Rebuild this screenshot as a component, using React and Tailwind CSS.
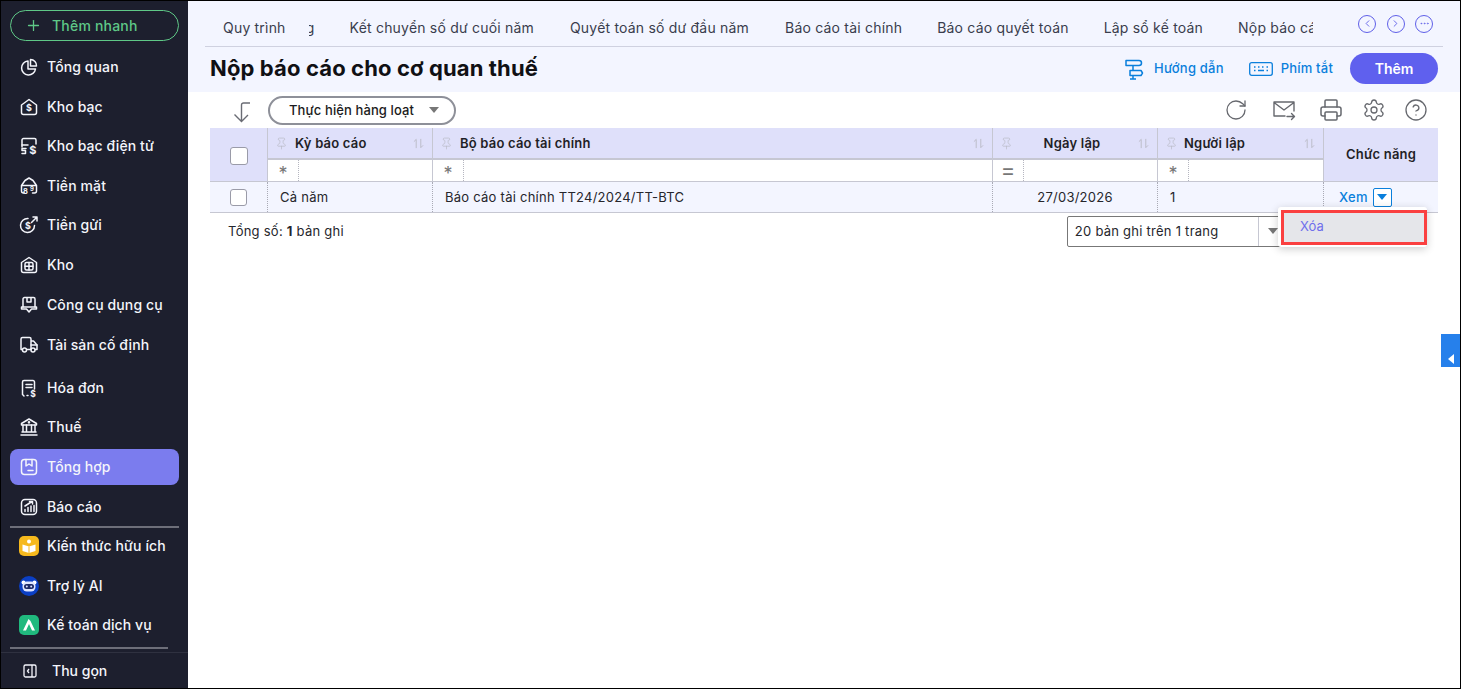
import React from "react";
import { RotateCw, Printer, Settings, CircleHelp, Plus, ChevronLeft, ChevronRight, Ellipsis, Pin } from "lucide-react";

const S = ({ children, className = "" }) => (
  <svg viewBox="0 0 20 20" fill="none" stroke="currentColor" strokeWidth="1.5" strokeLinecap="round" strokeLinejoin="round" className={"w-5 h-5 shrink-0 " + className}>{children}</svg>
);
const D = ({ x = 10, y = 13.5, s = 9 }) => (
  <text x={x} y={y} fontSize={s} fontWeight="700" textAnchor="middle" fill="currentColor" stroke="none" fontFamily="Inter">$</text>
);

const I = {
  overview: <S><path d="M9 4a7 7 0 1 0 7.5 8H9z" /><path d="M11.5 2.500a6 6 0 0 1 6 6.500h-6z" /></S>,
  treasury: <S><path d="M2.5 8 10 2.5 17.500 8v7.500a2 2 0 0 1-2 2h-11a2 2 0 0 1-2-2z" /><D y={14} /></S>,
  etreasury: <S><path d="M3 11V4a1.500 1.500 0 0 1 1.500-1.500h11A1.500 1.500 0 0 1 17 4v4" /><path d="M3 9h6M7 12.500H3v2h3.500v3H3" /><D x={14} y={17.500} s={11} /></S>,
  cash: <S><path d="M2.500 15V9.500L6 4.500 10 2l4 2.500 3.500 5V15a2 2 0 0 1-2 2h-2M2.500 9.500h15M5 17H4.500a2 2 0 0 1-2-2" /><text x="6.500" y="17.500" fontSize="7.500" fontWeight="700" textAnchor="middle" fill="currentColor" stroke="none" fontFamily="Inter">8</text><text x="13" y="15" fontSize="6" fontWeight="700" textAnchor="middle" fill="currentColor" stroke="none" fontFamily="Inter">9</text></S>,
  deposit: <S><path d="M15.500 10.500A7 7 0 1 1 9 3.500" /><path d="M12.500 7.500 18 2M14 2h4v4" /><D x={9} y={14} /></S>,
  stock: <S><path d="M2.500 7.500 10 2.500l7.500 5v8a2 2 0 0 1-2 2h-11a2 2 0 0 1-2-2z" /><rect x="6" y="7.500" width="8" height="7.500" rx="1.500" /><path d="M10 7.500V15M6 11.200h8" /></S>,
  tools: <S><path d="M4 12V4a1.500 1.500 0 0 1 1.500-1.500h9A1.500 1.500 0 0 1 16 4v8M8 2.500V7h4V2.500" /><path d="M2.500 12h15v2h-5l-2.500 3-2.500-3h-5z" /></S>,
  asset: <S><path d="M2 14V4a1.500 1.500 0 0 1 1.500-1.500h7A1.500 1.500 0 0 1 12 4v10M12 6h2.500l3.500 4v4.500h-1.500M12 14.500H8M2 14.500h1" /><circle cx="5.500" cy="15" r="2" /><circle cx="14" cy="15" r="2" /><path d="M12 10h6" /></S>,
  invoice: <S><path d="M3.500 16.500V4A1.500 1.500 0 0 1 5 2.500h9A1.500 1.500 0 0 1 15.500 4v7M3.500 16.500 5 18M8 17.500h1" /><path d="M7 6.500h6M7 9.500h6" /><D x={14} y={18.800} s={8.500} /></S>,
  tax: <S><path d="M10 2 2.500 6.500v1.500h15V6.500z" /><path d="M4 8v7M7.500 8v7M12.500 8v7M16 8v7M3 15h14M2 18h16" /><circle cx="10" cy="5.300" r=".6" /></S>,
  sum: <S><rect x="2.500" y="2.500" width="15" height="15" rx="3" /><path d="M7 2.500V9l3-2 3 2V2.500M9 13.500h5" /></S>,
  report: <S><rect x="2.500" y="2.500" width="15" height="15" rx="3.500" /><path d="M6 14.500v-2M9 14.500v-4M12 14.500V9M15 14.500v-6M6 9l7-4.500M10.500 4.500H13.500V7" /></S>,
};

const Know = () => (
  <svg viewBox="0 0 20 20" className="w-5 h-5 shrink-0">
    <rect width="20" height="20" rx="5" fill="#f6b91d" />
    <circle cx="10" cy="5.500" r="2" fill="#fff" />
    <path d="M3.500 8.500 10 10.500l6.500-2v6.500L10 17l-6.500-2z" fill="#fff" />
    <path d="M10 10.500V17" stroke="#f6b91d" strokeWidth="1" />
  </svg>
);
const Bot = () => (
  <svg viewBox="0 0 20 20" className="w-5 h-5 shrink-0">
    <circle cx="10" cy="10" r="10" fill="#0b3fc4" />
    <circle cx="4.500" cy="6.500" r="2" fill="#fff" />
    <circle cx="15.500" cy="6.500" r="2" fill="#fff" />
    <rect x="3.500" y="5.500" width="13" height="10" rx="4.500" fill="#dfe6ff" />
    <rect x="5" y="8" width="10" height="5" rx="2.500" fill="#1e2a66" />
    <circle cx="7.800" cy="10.500" r="1" fill="#dfe6ff" />
    <circle cx="12.200" cy="10.500" r="1" fill="#dfe6ff" />
  </svg>
);
const Svc = () => (
  <svg viewBox="0 0 20 20" className="w-5 h-5 shrink-0">
    <rect width="20" height="20" rx="5" fill="#20b97e" />
    <path d="M9.500 4 4 15.500h3L10 9l3 6.500h3L11.500 6z" fill="#fff" />
  </svg>
);

const Item = ({ icon, label, active, className = "mt-1" }) => (
  <div className={"h-9 flex items-center gap-[8px] pl-[9px] rounded-lg text-[14px] tracking-[0.1px] font-medium text-[#f4f5fb] " + (active ? "bg-[#7b7cee] " : "") + className}>
    {icon}
    <span className="pb-[2px]">{label}</span>
  </div>
);

const Sidebar = () => (
  <aside className="w-[187px] shrink-0 bg-[#1d1f2e] flex flex-col">
    <div className="px-[9px] pt-[9px]">
      <div className="h-[31px] rounded-full border border-[#5fc887] flex items-center pl-[14px] gap-[10px] text-[#5fc887] text-[14px] tracking-[0.2px] font-medium">
        <Plus size={17} strokeWidth={1.8} />
        <span>Thêm nhanh</span>
      </div>
      <Item icon={I.overview} label="Tổng quan" className="mt-2" />
      <Item icon={I.treasury} label="Kho bạc" />
      <Item icon={I.etreasury} label="Kho bạc điện tử" className="mt-[3px]" />
      <Item icon={I.cash} label="Tiền mặt" />
      <Item icon={I.deposit} label="Tiền gửi" className="mt-[3px]" />
      <Item icon={I.stock} label="Kho" />
      <Item icon={I.tools} label="Công cụ dụng cụ" />
      <Item icon={I.asset} label="Tài sản cố định" />
      <Item icon={I.invoice} label="Hóa đơn" className="mt-[7px]" />
      <Item icon={I.tax} label="Thuế" className="mt-[3px]" />
      <Item icon={I.sum} label="Tổng hợp" active />
      <Item icon={I.report} label="Báo cáo" />
      <div className="h-[2px] bg-[#6d6e79] mt-px" />
      <Item icon={<Know />} label="Kiến thức hữu ích" className="mt-0" />
      <Item icon={<Bot />} label="Trợ lý AI" />
      <Item icon={<Svc />} label="Kế toán dịch vụ" className="mt-[3px]" />
      <div className="h-[2px] bg-[#6d6e79] mt-1 mr-[11px]" />
    </div>
    <div className="h-px bg-[#2f3140] mt-[3px]" />
    <div className="flex-1 flex items-center pl-[21px] gap-[14px] text-[14px] font-medium text-[#f4f5fb]">
      <svg viewBox="0 0 16 16" fill="none" stroke="currentColor" strokeWidth="1.300" className="w-4 h-4">
        <rect x="2" y="2" width="12" height="12" rx="1.500" />
        <path d="M10 2v12M7 6 5.500 8 7 10" />
      </svg>
      <span>Thu gọn</span>
    </div>
  </aside>
);

const Tab = ({ children, className = "" }) => <span className={"whitespace-nowrap " + className}>{children}</span>;

const Tabs = () => (
  <div className="h-[46px] border-b border-[#cfd1e0] ml-[17px] mr-[17px] flex items-center pl-[18px] pt-[8px] text-[14px] tracking-[0.2px] text-[#3a3d4d]">
    <Tab>Quy trình</Tab>
    <span className="ml-[23px] w-[6px] overflow-hidden whitespace-nowrap flex justify-end">ng</span>
    <Tab className="ml-[35px]">Kết chuyển số dư cuối năm</Tab>
    <Tab className="ml-[36px]">Quyết toán số dư đầu năm</Tab>
    <Tab className="ml-[36px]">Báo cáo tài chính</Tab>
    <Tab className="ml-[35px]">Báo cáo quyết toán</Tab>
    <Tab className="ml-[35px]">Lập sổ kế toán</Tab>
    <span className="ml-[35px] w-[75px] overflow-hidden whitespace-nowrap">Nộp báo cáo</span>
    <div className="ml-auto mr-[10px] -mt-[8px] flex items-center gap-[10.5px] text-[#5f5fe8]">
      <span className="w-[18px] h-[18px] rounded-full border border-[#5f5fe8] flex items-center justify-center"><ChevronLeft size={11} strokeWidth={2} /></span>
      <span className="w-[18px] h-[18px] rounded-full border border-[#5f5fe8] flex items-center justify-center"><ChevronRight size={11} strokeWidth={2} /></span>
      <span className="w-[18px] h-[18px] rounded-full border border-[#5f5fe8] flex items-center justify-center"><Ellipsis size={11} strokeWidth={1.500} /></span>
    </div>
  </div>
);

const Title = () => (
  <div className="h-[42px] flex items-center pl-[22px] pr-[22px]">
    <h1 className="text-[22px] font-bold text-[#101014] tracking-[0.13px]">Nộp báo cáo cho cơ quan thuế</h1>
    <div className="ml-auto flex items-center text-[13px] tracking-[0.2px] font-medium text-[#0a7fdc]">
      <svg viewBox="0 0 20 22" fill="none" stroke="currentColor" strokeWidth="1.500" strokeLinejoin="round" className="w-[20px] h-[22px] mt-[2px]">
        <path d="M2 2.500h13a2.500 2.500 0 0 1 0 5H2zM6 12.500h11l1.500 2.500-1.500 2.500H6zM9 7.500v5M9 17.500v3.500M6 21h6" />
      </svg>
      <span className="ml-[10px] mt-[2px]">Hướng dẫn</span>
      <svg viewBox="0 0 24 14" fill="none" stroke="currentColor" strokeWidth="1.300" className="w-[24px] h-[14px] ml-[25px] mt-[2px]">
        <rect x=".7" y=".7" width="22.600" height="12.600" rx="2" />
        <path d="M5 5h1.500M9 5h1.500M13 5h1.500M17.500 5h1.500M5 8.500h1.500M9 8.500h6M17.500 8.500h1.500" strokeWidth="1.500" />
      </svg>
      <span className="ml-[8px] mt-[2px]">Phím tắt</span>
      <div className="ml-[17px] w-[88px] h-[31px] rounded-full bg-[#5f60ee] text-white text-[14px] tracking-normal font-semibold flex items-center justify-center">Thêm</div>
    </div>
  </div>
);

const Toolbar = () => (
  <div className="h-[36px] flex items-center pl-[44px] pr-[32px]">
    <svg viewBox="0 0 20 22" fill="none" stroke="#6a6c74" strokeWidth="1.400" className="w-[20px] h-[22px] mt-[3px]">
      <path d="M18 2h-6.500a2 2 0 0 0-2 2v16M2.500 13.500 9.500 20.500 16 14" />
    </svg>
    <div className="ml-[16px] w-[188px] h-[29px] rounded-full border-2 border-[#8e9099] flex items-center pl-[19px] text-[13px] tracking-[0.1px] font-medium text-[#1b1b20]">
      <span className="pt-[1px]">Thực hiện hàng loạt</span>
      <span className="ml-[15px] w-0 h-0 border-x-[5px] border-x-transparent border-t-[6px] border-t-[#777]" />
    </div>
    <div className="ml-auto flex items-center text-[#66686e]">
      <RotateCw size={24} strokeWidth={1.300} />
      <svg viewBox="0 0 24 24" fill="none" stroke="currentColor" strokeWidth="1.400" strokeLinejoin="round" strokeLinecap="round" className="w-[24px] h-[24px] ml-[24px]">
        <path d="M13 18H2V4h20v9M2 4.500 12 12l10-7.500M15 18.500h7M19.500 15.500l3 3-3 3" />
      </svg>
      <Printer size={24} strokeWidth={1.500} className="ml-[23px]" />
      <Settings size={24} strokeWidth={1.300} className="ml-[19px]" />
      <CircleHelp size={24} strokeWidth={1.300} className="ml-[18px]" />
    </div>
  </div>
);

const SortI = () => (
  <svg viewBox="0 0 12 12" fill="none" stroke="#b9bac6" strokeWidth="1" className="w-[11px] h-[11px] ml-auto shrink-0">
    <path d="M3.500 11V1.500L1 4M8.500 1v9.500L11 8" />
  </svg>
);
const PinI = () => <Pin size={13} strokeWidth={1.300} className="text-[#b9bac6] shrink-0" />;

const HCell = ({ label, center, labelClass = "ml-[7px]" }) => (
  <div className="h-[32px] bg-[#dfe0fa] border-l border-b-2 border-[#c6c7d2] flex items-center pl-[7px] pr-[8px] text-[13px] tracking-[0.2px] font-semibold text-[#1f1f26]">
    <PinI />
    <span className={center ? "flex-1 text-center pt-[2px] pr-[7px]" : "pt-[2px] " + labelClass}>{label}</span>
    <SortI />
  </div>
);
const FCell = ({ sym = "*" }) => (
  <div className="h-[22px] bg-white border-l border-b border-[#c6c7d2] flex text-[#777]">
    <span className={"w-[31px] shrink-0 border-r border-dotted border-[#b5b6c0] flex items-center justify-center " + (sym === "=" ? "text-[22px] font-normal" : "text-[18px] font-normal pt-[6px]")}>{sym}</span>
  </div>
);
const Cell = ({ children, className = "" }) => (
  <div className={"h-[30px] bg-[#f3f5ff] border-l border-dotted border-[#a9aab5] flex items-center text-[13px] tracking-[0.25px] " + className}>{children}</div>
);

const Table = () => (
  <div className="mx-[22px] grid grid-cols-[57px_165px_560px_165px_166px_115px] border-b border-[#c6c7d2]">
    <div className="row-span-2 bg-[#dfe0fa] border-b border-[#c6c7d2] flex items-center justify-center pt-[2px]">
      <span className="w-[18px] h-[18px] bg-white rounded-[3px] border border-[#9a9ba8]" />
    </div>
    <HCell label="Kỳ báo cáo" />
    <HCell label="Bộ báo cáo tài chính" />
    <HCell label="Ngày lập" center />
    <HCell label="Người lập" labelClass="ml-[6px]" />
    <div className="row-span-2 bg-[#dfe0fa] border-l border-b border-[#c6c7d2] flex items-center justify-center text-[13px] tracking-[0.2px] font-semibold text-[#1f1f26]">Chức năng</div>
    <FCell />
    <FCell />
    <FCell sym="=" />
    <FCell />
    <div className="h-[30px] bg-[#f3f5ff] flex items-center justify-center">
      <span className="w-[17px] h-[17px] bg-white rounded-[3px] border border-[#9a9ba8]" />
    </div>
    <Cell className="pl-[12px] text-[#26262c]"><span className="pt-[2px]">Cả năm</span></Cell>
    <Cell className="pl-[12px] text-[#26262c]"><span className="pt-[2px]">Báo cáo tài chính TT24/2024/TT-BTC</span></Cell>
    <Cell className="justify-center text-[#26262c]"><span className="pt-[2px]">27/03/2026</span></Cell>
    <Cell className="pl-[12px] text-[#26262c]"><span className="pt-[2px]">1</span></Cell>
    <Cell className="pl-[15px] font-medium text-[#0a7fdc]">
      <span className="pt-[2px]">Xem</span>
      <span className="ml-[5px] w-[19px] h-[19px] bg-white rounded-[2px] border border-[#0a7fdc] flex items-center justify-center">
        <span className="w-0 h-0 border-x-[5px] border-x-transparent border-t-[6px] border-t-[#0a7fdc]" />
      </span>
    </Cell>
  </div>
);

const Pager = () => (
  <div className="h-[37px] flex items-center pl-[40px] text-[13px] tracking-[0.25px] text-[#26262c]">
    <span>Tổng số: <b className="font-bold">1</b> bản ghi</span>
    <div className="ml-[723px] w-[221px] h-[31px] -mt-[1px] bg-white rounded-[2px] border border-[#777] flex items-center pl-[7px]">
      <span className="w-[183px] pt-[1px]">20 bản ghi trên 1 trang</span>
      <span className="w-px h-full bg-[#c6c7d2]" />
      <span className="ml-[9px] w-0 h-0 border-x-[5px] border-x-transparent border-t-[6px] border-t-[#777]" />
    </div>
  </div>
);

export default function App() {
  return (
    <div className="relative w-[1461px] h-[689px] overflow-hidden border border-black flex bg-white" style={{ fontFamily: "Inter, 'Noto Sans', sans-serif" }}>
      <Sidebar />
      <main className="flex-1 min-w-0">
        <div className="bg-[#f3f5ff] h-[91px]">
          <Tabs />
          <Title />
        </div>
        <Toolbar />
        <Table />
        <Pager />
      </main>
      <div className="absolute left-[1277px] top-[206px] w-[149px] h-[40px] bg-white rounded-[3px] shadow-[0_2px_8px_rgba(0,0,0,0.2)] pt-[3px] pl-[3px]">
        <div className="w-[146px] h-[35px] bg-[#e5e6ea] border-[3px] border-[#fa4040] flex items-center pl-[16px] pb-[1px] text-[13px] text-[#6f6fec]">Xóa</div>
      </div>
      <div className="absolute left-[1440px] top-[333px] w-[20px] h-[33px] bg-[#2680eb] flex items-end justify-center pb-[3px]">
        <span className="w-0 h-0 border-y-[5px] border-y-transparent border-r-[6px] border-r-white" />
      </div>
    </div>
  );
}
